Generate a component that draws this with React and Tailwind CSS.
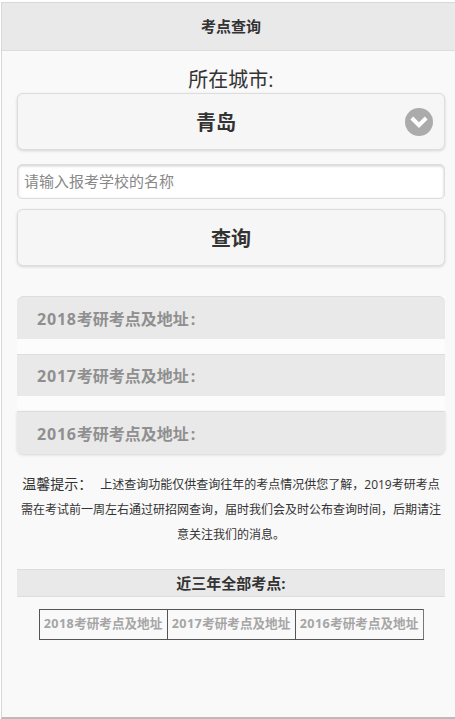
import React from "react"

const years = ["2018", "2017", "2016"]

const noticeLabel = "温馨提示\uFF1A"
const noticeText =
  "上述查询功能仅供查询往年的考点情况供您了解\uFF0C2019考研考点需在考试前一周左右通过研招网查询\uFF0C届时我们会及时公布查询时间\uFF0C后期请注意关注我们的消息\u3002"

function ChevronBadge() {
  return (
    <span className="absolute right-[11px] top-[14px] flex h-[28px] w-[28px] items-center justify-center rounded-full bg-[#ababab]">
      <svg width="20" height="20" viewBox="0 0 20 20" fill="none">
        <path d="M2.8 6 L10 13.2 L17.2 6" stroke="#fff" strokeWidth="4" />
      </svg>
    </span>
  )
}

export default function App() {
  return (
    <div className="h-[719px] w-[455px] overflow-hidden bg-white pl-[1px] pt-[2px] font-['Open_Sans','Noto_Sans_CJK_SC',sans-serif] text-[#333]">
      <div className="flex h-[717px] w-[454px] flex-col border-b-[2px] border-l border-t border-[#d8d8d8] border-b-[#bbb] bg-[#f9f9f9]">
        {/* Header */}
        <div className="flex h-[48px] items-center justify-center border-b border-[#ddd] bg-[#e9e9e9] pl-[5px] text-[15px] font-bold leading-none">
          考点查询
        </div>

        <div className="flex flex-col pl-[15px] pr-[10px]">
          {/* City select */}
          <div className="mt-[16px] text-center text-[20px] leading-[26px] text-[#333]">所在城市:</div>
          <div className="relative flex h-[57px] items-center justify-center rounded-[6px] border border-[#ddd] bg-[#f6f6f6] pr-[30px] pt-[2px] text-[20px] font-bold shadow-[0_1px_3px_rgba(0,0,0,0.15)]">
            青岛
            <ChevronBadge />
          </div>

          {/* School input */}
          <input
            className="mt-[14px] h-[35px] rounded-[5px] border border-[#ddd] bg-white pb-[2px] pl-[6px] pr-[7px] text-[15px] text-[#333] shadow-[inset_0_1px_3px_rgba(0,0,0,0.2)] outline-none placeholder:text-[#888]"
            placeholder="请输入报考学校的名称"
          />

          {/* Query button */}
          <button className="mt-[10px] h-[57px] rounded-[6px] border border-[#ddd] bg-[#f6f6f6] pt-[2px] text-[20px] font-bold shadow-[0_1px_3px_rgba(0,0,0,0.15)]">
            查询
          </button>

          {/* Yearly results */}
          <div className="mt-[30px] flex flex-col gap-[15px] bg-[#fcfcfc]">
            {years.map((year, i) => (
              <div
                key={year}
                className={`flex items-center border-t border-[#ddd] bg-[#e9e9e9] pl-[20px] text-[16px] font-bold text-[#8f8f8f] ${i === 1 ? "h-[42px]" : "h-[43px] pt-[2px]"} ${i === 0 ? "rounded-t-[6px]" : ""} ${i === 2 ? "rounded-b-[6px] shadow-[0_1px_3px_rgba(0,0,0,0.15)]" : ""}`}
              >
                <span className="tracking-[0.8px]">{year}</span>考研考点及地址
                <span className="ml-[2px]">:</span>
              </div>
            ))}
          </div>

          {/* Notice */}
          <p className="mt-[17px] px-[2px] text-center text-[12px] leading-[25px] text-[#333]">
            <span className="mr-[8px] text-[14px]">{noticeLabel}</span>
            {noticeText}
          </p>

          {/* All exam sites */}
          <div className="mt-[22px] flex h-[28px] items-center justify-center border-y border-[#ddd] bg-[#e9e9e9] text-[15px] font-bold">
            近三年全部考点:
          </div>
          <div className="mt-[12px] flex justify-center">
            <table className="border-collapse">
              <tbody>
                <tr>
                  {years.map((year, i) => (
                    <td
                      key={year}
                      className={`h-[30px] w-[128px] border border-[#555] p-0 text-center text-[12.6px] font-bold whitespace-nowrap text-[#a5a5a5] ${i === 2 ? "border-r-[#777]" : ""}`}
                    >
                      <span className="tracking-[0.4px]">{year}</span>考研考点及地址
                    </td>
                  ))}
                </tr>
              </tbody>
            </table>
          </div>
        </div>
      </div>
    </div>
  )
}
